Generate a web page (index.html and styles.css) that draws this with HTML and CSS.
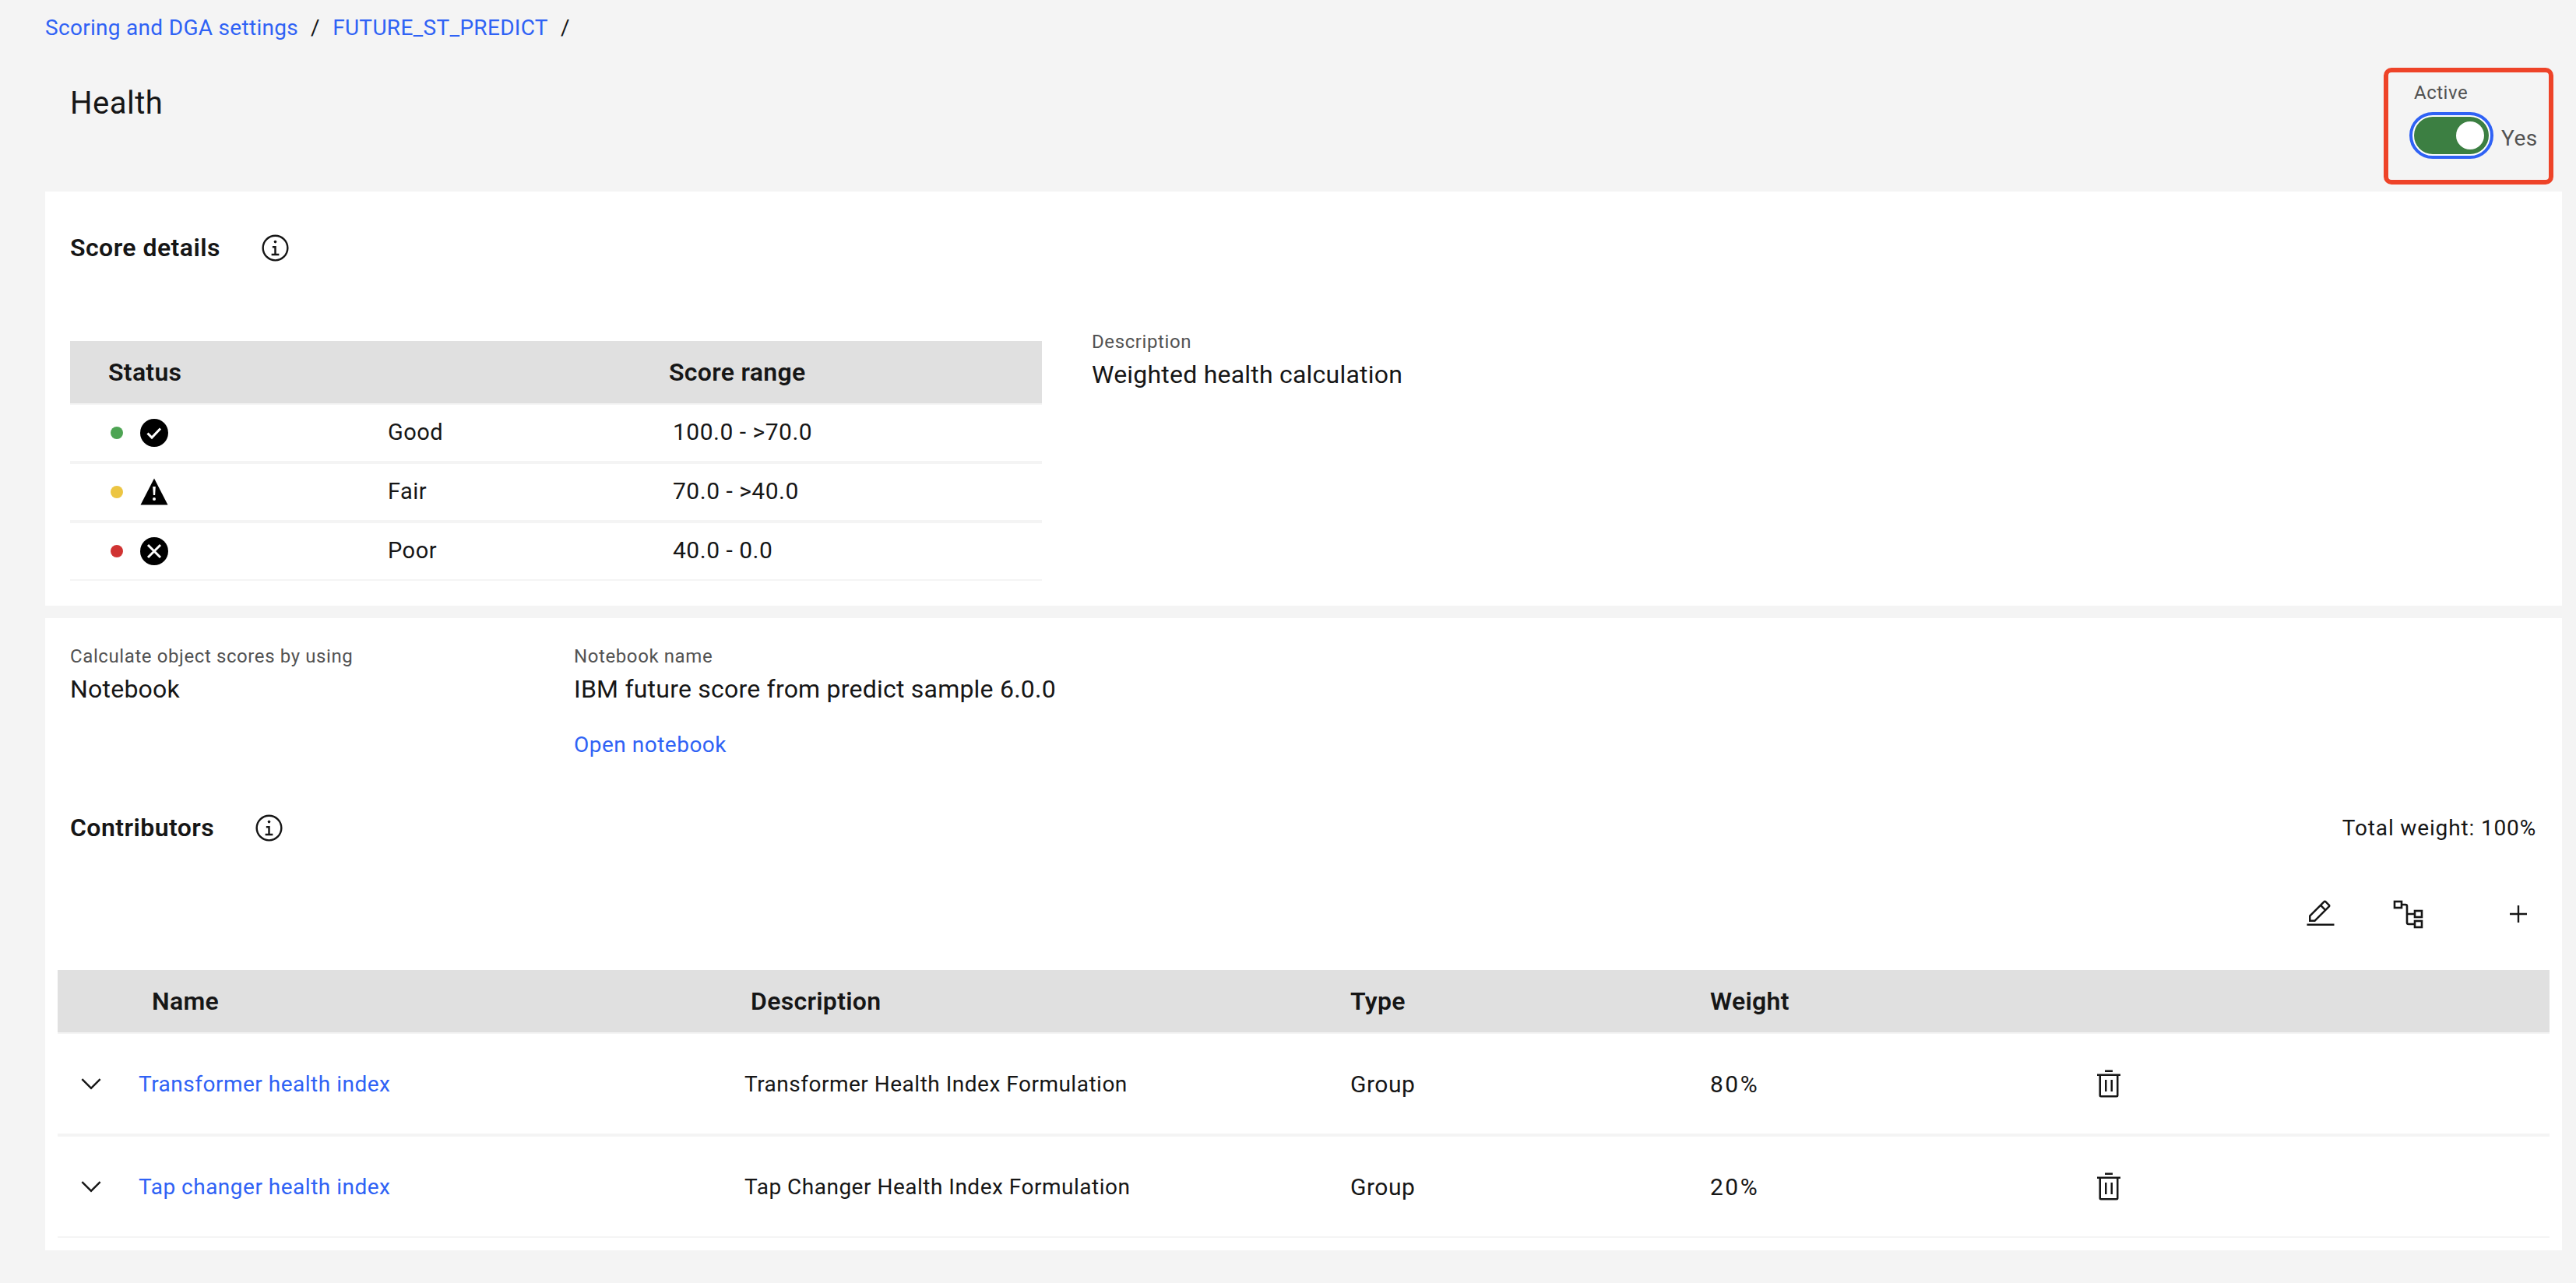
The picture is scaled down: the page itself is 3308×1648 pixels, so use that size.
FILE: index.html
```html
<!DOCTYPE html>
<html lang="en">
<head>
  <meta charset="UTF-8" />
  <title>Health</title>
  <link rel="stylesheet" href="styles.css">
</head>
<body>
  <!-- Breadcrumb -->
  <nav class="breadcrumb">
    <a href="#">Scoring and DGA settings</a><span class="crumb-sep">/</span>
    <a href="#">FUTURE_ST_PREDICT</a><span class="crumb-sep">/</span>
  </nav>

  <!-- Page title + active toggle -->
  <header class="page-head">
    <h1>Health</h1>
    <div class="active-box">
      <div class="active-label">Active</div>
      <div class="active-row">
        <span class="toggle"><span class="toggle-track"><span class="toggle-knob"></span></span></span>
        <span class="toggle-text">Yes</span>
      </div>
    </div>
    <div class="callout"></div>
  </header>

  <!-- Score details -->
  <section class="panel panel-score">
    <div class="section-title">
      <h2>Score details</h2>
      <svg class="icon info-icon" viewBox="0 0 32 32"><polygon points="17 22 17 14 13 14 13 16 15 16 15 22 12 22 12 24 20 24 20 22 17 22"/><path d="M16,8a1.5,1.5,0,1,0,1.5,1.5A1.5,1.5,0,0,0,16,8Z"/><path d="M16,30A14,14,0,1,1,30,16,14,14,0,0,1,16,30ZM16,4A12,12,0,1,0,28,16,12,12,0,0,0,16,4Z"/></svg>
    </div>
    <div class="score-body">
      <div class="score-table">
        <div class="score-row score-head">
          <div class="status-head">Status</div>
          <div></div>
          <div class="range-head">Score range</div>
        </div>
        <div class="score-row">
          <div class="status-cell">
            <span class="dot dot-good"></span>
            <svg class="status-icon" viewBox="0 0 36 36"><circle cx="18" cy="18" r="18"/><path d="M9.5 18.5l5.5 5.5 11-11.5" fill="none" stroke="#fff" stroke-width="3"/></svg>
          </div>
          <div class="score-text status-label">Good</div>
          <div class="score-text range-cell">100.0 - &gt;70.0</div>
        </div>
        <div class="score-row">
          <div class="status-cell">
            <span class="dot dot-fair"></span>
            <svg class="status-icon" viewBox="0 0 36 36"><path d="M18 0.5L35.5 34.5H0.5z"/><path d="M16.2 11h3.6l-0.7 11h-2.2z" fill="#fff"/><circle cx="18" cy="27" r="2" fill="#fff"/></svg>
          </div>
          <div class="score-text status-label">Fair</div>
          <div class="score-text range-cell">70.0 - &gt;40.0</div>
        </div>
        <div class="score-row score-row-last">
          <div class="status-cell">
            <span class="dot dot-poor"></span>
            <svg class="status-icon" viewBox="0 0 36 36"><circle cx="18" cy="18" r="18"/><path d="M10 10l16 16M26 10l-16 16" fill="none" stroke="#fff" stroke-width="3"/></svg>
          </div>
          <div class="score-text status-label">Poor</div>
          <div class="score-text range-cell">40.0 - 0.0</div>
        </div>
      </div>
      <div class="score-desc">
        <div class="field-label">Description</div>
        <div class="field-value">Weighted health calculation</div>
      </div>
    </div>
  </section>

  <!-- Notebook + contributors -->
  <section class="panel panel-contrib">
    <div class="notebook">
      <div class="notebook-col">
        <div class="field-label">Calculate object scores by using</div>
        <div class="field-value">Notebook</div>
      </div>
      <div>
        <div class="field-label">Notebook name</div>
        <div class="field-value">IBM future score from predict sample 6.0.0</div>
        <a class="open-link" href="#">Open notebook</a>
      </div>
    </div>

    <div class="contrib-head">
      <div class="section-title">
        <h2>Contributors</h2>
        <svg class="icon info-icon" viewBox="0 0 32 32"><polygon points="17 22 17 14 13 14 13 16 15 16 15 22 12 22 12 24 20 24 20 22 17 22"/><path d="M16,8a1.5,1.5,0,1,0,1.5,1.5A1.5,1.5,0,0,0,16,8Z"/><path d="M16,30A14,14,0,1,1,30,16,14,14,0,0,1,16,30ZM16,4A12,12,0,1,0,28,16,12,12,0,0,0,16,4Z"/></svg>
      </div>
      <div class="total-weight">Total weight: 100%</div>
    </div>

    <div class="toolbar">
      <svg class="icon tool-edit" viewBox="0 0 32 32"><rect x="2" y="26" width="28" height="2"/><path d="M25.4,9c0.8-0.8,0.8-2,0-2.8l-3.6-3.6c-0.8-0.8-2-0.8-2.8,0l-15,15V24h6.4L25.4,9z M20.4,4L24,7.6l-3,3L17.4,7L20.4,4z M6,22v-3.6l10-10l3.6,3.6l-10,10H6z"/></svg>
      <svg class="icon tool-tree" viewBox="0 0 40 40"><g fill="none" stroke="#161616" stroke-width="2.6"><rect x="3" y="4" width="9" height="8"/><rect x="29" y="16" width="9" height="8"/><rect x="29" y="29" width="9" height="8"/><path d="M12 8h5q2 0 2 2v21q0 2 2 2h8M19 20h10"/></g></svg>
      <svg class="icon tool-plus" viewBox="0 0 40 40"><path d="M20 9v22M9 20h22" fill="none" stroke="#161616" stroke-width="2.4"/></svg>
    </div>

    <div class="contrib-table">
      <div class="contrib-row contrib-header">
        <div></div>
        <div class="head-name">Name</div>
        <div class="head-desc">Description</div>
        <div>Type</div>
        <div>Weight</div>
        <div></div>
      </div>
      <div class="contrib-row">
        <svg class="icon chevron" viewBox="0 0 32 32"><polygon points="16 22 6 12 7.4 10.6 16 19.2 24.6 10.6 26 12 16 22"/></svg>
        <a href="#">Transformer health index</a>
        <div>Transformer Health Index Formulation</div>
        <div class="type-cell">Group</div>
        <div class="weight-cell">80%</div>
        <svg class="icon trash" viewBox="0 0 32 32"><rect x="12" y="12" width="2" height="12"/><rect x="18" y="12" width="2" height="12"/><path d="M4,6V8H6V28a2,2,0,0,0,2,2H24a2,2,0,0,0,2-2V8h2V6ZM8,28V8H24V28Z"/><rect x="12" y="2" width="8" height="2"/></svg>
      </div>
      <div class="contrib-row contrib-row-last">
        <svg class="icon chevron" viewBox="0 0 32 32"><polygon points="16 22 6 12 7.4 10.6 16 19.2 24.6 10.6 26 12 16 22"/></svg>
        <a href="#">Tap changer health index</a>
        <div>Tap Changer Health Index Formulation</div>
        <div class="type-cell">Group</div>
        <div class="weight-cell">20%</div>
        <svg class="icon trash" viewBox="0 0 32 32"><rect x="12" y="12" width="2" height="12"/><rect x="18" y="12" width="2" height="12"/><path d="M4,6V8H6V28a2,2,0,0,0,2,2H24a2,2,0,0,0,2-2V8h2V6ZM8,28V8H24V28Z"/><rect x="12" y="2" width="8" height="2"/></svg>
      </div>
    </div>
  </section>
</body>
</html>
```

FILE: styles.css
```css
/* ===== Base ===== */
* { box-sizing: border-box; margin: 0; padding: 0; }
body {
  background: #f4f4f4;
  color: #161616;
  font-family: Roboto, "Liberation Sans", sans-serif;
  font-size: 28px;
  letter-spacing: 0.5px;
  padding: 0 18px 0 58px;
  height: 1648px;
  overflow: hidden;
}
a { color: #2f62f5; text-decoration: none; }
.icon { fill: #161616; display: block; flex: none; }

/* ===== Breadcrumb ===== */
.breadcrumb { height: 72px; line-height: 72px; letter-spacing: 0.3px; }
.crumb-sep { margin: 0 9px 0 16px; }

/* ===== Page head ===== */
.page-head {
  position: relative;
  height: 174px;
  display: flex;
  justify-content: space-between;
  padding: 0 32px 0 32px;
}
h1 {
  font-size: 40px;
  font-weight: 400;
  line-height: 48px;
  padding-top: 37px;
}
.active-box { padding-top: 32px; width: 165px; margin-right: -1px; }
.active-label {
  font-size: 24px;
  line-height: 30px;
  color: #525252;
  padding-left: 6px;
}
.active-row { display: flex; align-items: center; gap: 10px; margin-top: 10px; }
.toggle {
  width: 108px;
  height: 60px;
  border: 4px solid #2f62f5;
  border-radius: 30px;
  padding: 2px;
  background: #fff;
  flex: none;
}
.toggle-track {
  display: flex;
  align-items: center;
  justify-content: flex-end;
  height: 100%;
  padding-right: 6px;
  background: #3c7f42;
  border-radius: 24px;
}
.toggle-knob { width: 36px; height: 36px; border-radius: 50%; background: #fff; }
.toggle-text { color: #525252; font-size: 28px; padding-top: 6px; }

/* Red annotation box around the toggle */
.callout {
  position: absolute;
  left: 3003px;
  top: 15px;
  width: 218px;
  height: 150px;
  border: 6px solid #ee4328;
  border-radius: 10px;
}

/* ===== Panels ===== */
.panel { background: #fff; }
.panel-score { height: 532px; padding: 50px 0 0 32px; margin-bottom: 16px; }
.panel-contrib { height: 812px; padding-top: 33px; }

.section-title { display: flex; align-items: center; }
h2 { font-size: 32px; font-weight: 600; line-height: 44px; letter-spacing: 0.45px; }
.panel-score .info-icon { margin-left: 51px; }
.contrib-head .info-icon { margin-left: 51px; }
.info-icon { width: 39px; height: 39px; }

.field-label { font-size: 24px; line-height: 32px; color: #525252; letter-spacing: 0.6px; }
.field-value { font-size: 32px; line-height: 40px; margin-top: 6px; letter-spacing: 0.22px; }

/* ===== Score table ===== */
.score-body { display: flex; gap: 64px; margin-top: 98px; }
.score-table { width: 1248px; }
.score-row {
  display: grid;
  grid-template-columns: 408px 365px 1fr;
  align-items: center;
  height: 76px;
  border-bottom: 4px solid #f4f4f4;
}
.score-row-last { border-bottom-width: 2px; height: 74px; }
.score-head {
  height: 82px;
  border-bottom-width: 2px;
  background: #e0e0e0;
  background-clip: padding-box;
  grid-template-columns: 769px 0 1fr;
  font-size: 32px;
  font-weight: 600;
  letter-spacing: 0.3px;
}
.score-text { font-size: 30px; padding-bottom: 3px; }
.status-label { font-size: 29px; }
.range-cell { padding-left: 1px; }
.status-head { padding-left: 49px; }
.status-cell { display: flex; align-items: center; gap: 22px; padding-left: 52px; }
.dot { width: 16px; height: 16px; border-radius: 50%; flex: none; }
.dot-good { background: #4da453; }
.dot-fair { background: #ecc542; }
.dot-poor { background: #d03332; }
.status-icon { width: 36px; height: 36px; fill: #000; flex: none; }
.score-desc { margin-top: -15px; }

/* ===== Notebook ===== */
.notebook { display: flex; padding-left: 32px; height: 150px; }
.notebook-col { width: 647px; }
.open-link { display: block; line-height: 40px; margin-top: 32px; font-size: 28px; }

/* ===== Contributors ===== */
.contrib-head {
  display: flex;
  justify-content: space-between;
  align-items: center;
  margin-top: 64px;
  padding: 0 33px 0 32px;
}
.total-weight { font-size: 28px; letter-spacing: 0.85px; }
.toolbar {
  display: flex;
  justify-content: flex-end;
  align-items: center;
  margin-top: 69px;
  padding-right: 36px;
}
.tool-edit { width: 40px; height: 40px; margin-right: 72px; }
.tool-tree { width: 40px; height: 40px; margin-right: 102px; }
.tool-plus { width: 40px; height: 40px; }

.contrib-table { margin: 52px 16px 0; }
.contrib-row {
  display: grid;
  grid-template-columns: 104px 778px 778px 462px 492px 40px;
  align-items: center;
  height: 132px;
  border-bottom: 4px solid #f4f4f4;
}
.contrib-row-last { height: 130px; border-bottom-width: 2px; }
.contrib-header {
  height: 82px;
  border-bottom-width: 2px;
  background: #e0e0e0;
  background-clip: padding-box;
  font-size: 32px;
  font-weight: 600;
  letter-spacing: 0.3px;
}
.type-cell { font-size: 30px; letter-spacing: 0.5px; }
.weight-cell { font-size: 30px; letter-spacing: 2.5px; }
.head-name { padding-left: 17px; }
.head-desc { padding-left: 8px; }
.chevron { width: 40px; height: 40px; margin-left: 23px; }
.trash { width: 40px; height: 40px; }
```
